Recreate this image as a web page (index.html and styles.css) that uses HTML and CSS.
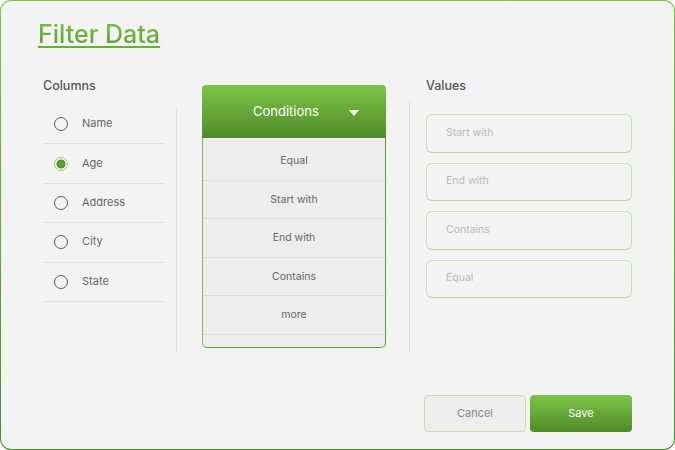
FILE: index.html
```html
<!DOCTYPE html>
<html>
<head>
<meta charset="utf-8">
<link rel="stylesheet" href="styles.css">
</head>
<body>
<div class="dialog">
  <h1 class="title">Filter Data</h1>
  <div class="main">
    <section class="col-columns">
      <h2 class="label">Columns</h2>
      <ul class="radio-list">
        <li class="radio-row"><span class="radio"></span><span class="radio-text">Name</span></li>
        <li class="radio-row"><span class="radio checked"></span><span class="radio-text">Age</span></li>
        <li class="radio-row"><span class="radio"></span><span class="radio-text">Address</span></li>
        <li class="radio-row"><span class="radio"></span><span class="radio-text">City</span></li>
        <li class="radio-row"><span class="radio"></span><span class="radio-text">State</span></li>
      </ul>
    </section>
    <div class="vdivider vd1"></div>
    <section class="conditions">
      <div class="cond-head"><span class="cond-title">Conditions</span><span class="caret"></span></div>
      <ul class="cond-list">
        <li class="cond-item">Equal</li>
        <li class="cond-item">Start with</li>
        <li class="cond-item">End with</li>
        <li class="cond-item">Contains</li>
        <li class="cond-item">more</li>
      </ul>
    </section>
    <div class="vdivider vd2"></div>
    <section class="values">
      <h2 class="label">Values</h2>
      <div class="inputs">
        <div class="input">Start with</div>
        <div class="input">End with</div>
        <div class="input">Contains</div>
        <div class="input">Equal</div>
      </div>
    </section>
  </div>
  <div class="footer">
    <button class="btn cancel">Cancel</button>
    <button class="btn save">Save</button>
  </div>
</div>
</body>
</html>
```
FILE: styles.css
```css
* { box-sizing: border-box; }
html, body { margin: 0; padding: 0; }
body {
  width: 675px;
  height: 450px;
  background: #ffffff;
  font-family: Inter, "Noto Sans", "Liberation Sans", sans-serif;
}
.dialog {
  width: 675px;
  height: 450px;
  border: 1px solid transparent;
  border-radius: 11px;
  background: linear-gradient(#f3f3f3, #f3f3f3) padding-box,
              linear-gradient(180deg, #7dc545, #4e8a28) border-box;
  padding: 18px 42px 17px 37px;
  display: flex;
  flex-direction: column;
}
.title {
  margin: 0;
  align-self: flex-start;
  font-size: 25px;
  line-height: 31px;
  font-weight: 500;
  letter-spacing: 0;
  background: linear-gradient(180deg, #7cc245, #5a9e2f);
  -webkit-background-clip: text;
  background-clip: text;
  color: transparent;
  text-decoration: underline;
  text-decoration-color: #6aae3a;
  text-decoration-thickness: 2px;
  text-underline-offset: 3px;
}
.main {
  margin-top: 28px;
  display: flex;
  align-items: flex-start;
}
.label {
  margin: 0;
  font-size: 12.5px;
  line-height: 16px;
  font-weight: 500;
  color: #555;
}
.col-columns {
  width: 122px;
  margin-left: 5px;
}
.radio-list {
  list-style: none;
  margin: 11px 0 0 0;
  padding: 0;
}
.radio-row {
  height: 39.4px;
  border-bottom: 1px solid #dfdfdf;
  display: flex;
  align-items: center;
  gap: 14px;
  padding-left: 10px;
  font-size: 11px;
  color: #666;
  margin-left: 1px;
}
.radio-text {
  padding-bottom: 2px;
}
.radio {
  width: 14px;
  height: 14px;
  border-radius: 50%;
  border: 1.3px solid #5a5a5a;
  flex: none;
}
.radio.checked {
  border: 1.5px solid #93cf6c;
  background: radial-gradient(circle, #62ad35 0, #4f9427 4.2px, #f3f3f3 4.8px);
}
.vdivider {
  width: 1px;
  background: #dedede;
  flex: none;
}
.vd1 {
  margin-left: 11px;
  margin-top: 29px;
  height: 245px;
}
.vd2 {
  margin-left: 23px;
  margin-top: 24px;
  height: 250px;
}
.conditions {
  width: 184px;
  margin-left: 25px;
  margin-top: 7px;
  flex: none;
}
.cond-head {
  height: 53px;
  border-radius: 4px 4px 0 0;
  background: linear-gradient(180deg, #7dc546, #4f8b29);
  display: flex;
  align-items: center;
  padding: 0 27px 2px 51px;
  justify-content: space-between;
}
.cond-title {
  color: #fff;
  font-size: 13px;
  font-weight: 400;
}
.caret {
  width: 0;
  height: 0;
  border-left: 5px solid transparent;
  border-right: 5px solid transparent;
  border-top: 6px solid #fff;
  margin-top: 4px;
}
.cond-list {
  list-style: none;
  margin: 0;
  padding: 4px 0 12.5px 0;
  background: #ededed;
  border: 1px solid #6aae3b;
  border-top: none;
  border-color: #79bf45 #5c9b32 #5a9a31 #79bf45;
  border-radius: 0 0 5px 5px;
}
.cond-item {
  height: 38.5px;
  border-bottom: 1px solid #dadada;
  display: flex;
  align-items: center;
  justify-content: center;
  font-size: 10.5px;
  color: #666;
}
.values {
  width: 206px;
  margin-left: 16px;
  flex: none;
}
.inputs {
  margin-top: 20px;
  display: flex;
  flex-direction: column;
  gap: 10px;
}
.input {
  height: 38.5px;
  border: 1px solid #c6e0b0;
  border-bottom-color: #b5d49a;
  border-radius: 6px;
  display: flex;
  align-items: center;
  padding-left: 19px;
  padding-bottom: 2px;
  font-size: 10.5px;
  color: #b9b9b9;
}
.footer {
  margin-top: auto;
  display: flex;
  justify-content: flex-end;
  gap: 4px;
}
.btn {
  width: 102px;
  height: 37px;
  border-radius: 4px;
  font-family: inherit;
  font-size: 11px;
  padding: 0 0 2px 0;
}
.cancel {
  background: #ededed;
  border: 1px solid #c3deac;
  color: #888;
}
.save {
  background: linear-gradient(180deg, #7dc546, #4f8b29);
  border: none;
  color: #fff;
}
```
